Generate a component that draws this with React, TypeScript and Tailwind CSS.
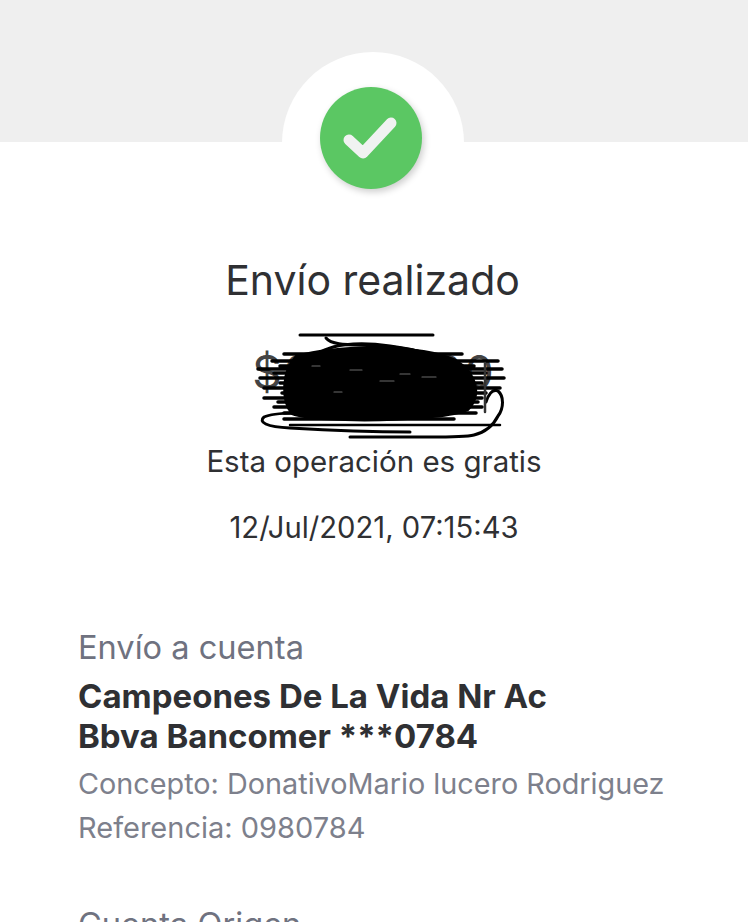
import React, { FC } from "react";

const Scribble: FC = () => (
  <svg className="absolute left-[250px] top-[330px]" width="260" height="112" viewBox="0 0 260 112" fill="none" stroke="#000" strokeLinecap="round">
    <path d="M50 5H183" strokeWidth="3" />
    <path d="M76 8C84 18 112 13 150 18C180 22 196 30 206 42" strokeWidth="3" />
    <path d="M60 30C76 12 112 12 140 16C170 20 190 26 200 38" strokeWidth="3" />
    <path d="M34 24H212M22 31H248M30 36H224M8 39H252M24 43H236M10 48H254M30 53H232M14 58H250M32 63H236M14 68H232M28 72H228M24 77H232M34 83H226M34 89H204" strokeWidth="3.5" />
    <path d="M46 26C90 14 170 14 206 30C228 44 232 66 218 80C190 92 70 94 42 84C30 70 32 40 46 26Z" fill="#000" strokeWidth="2" />
    <path d="M92 84C60 82 24 82 14 87C8 92 16 97 40 98C90 101 130 102 160 102" strokeWidth="3" />
    <path d="M40 95H250" strokeWidth="2.5" />
    <path d="M100 107H153C180 107 212 108 224 105C236 102 244 94 248 86C254 78 254 66 248 61C242 58 238 66 236 72" strokeWidth="3" />
    <path d="M235 33V82" stroke="#333" strokeWidth="2.5" />
    <path d="M100 40H112M130 51H144M84 62H92M150 44H160M172 47H186M62 36H70" stroke="#6a6a6a" strokeWidth="1.2" />
  </svg>
);

const CheckBadge: FC = () => (
  <div className="absolute left-[282px] top-[52px] h-[182px] w-[182px] rounded-full bg-white pt-[35px] pl-[38px]">
    <div className="h-[102px] w-[102px] rounded-full bg-[#5bc763] shadow-[2px_3px_7px_rgba(0,0,0,0.2)]">
      <svg width="102" height="102" viewBox="0 0 102 102" fill="none">
        <path d="M29 53L43 66L71 36" stroke="#f0f2f1" strokeWidth="11" strokeLinecap="round" strokeLinejoin="round" />
      </svg>
    </div>
  </div>
);

const App: FC = () => {
  return (
    <div className="relative h-[922px] w-[748px] overflow-hidden bg-white font-['Inter',sans-serif]">
      <div className="h-[142px] bg-[#efefef]" />
      <CheckBadge />
      <section className="flex flex-col items-center pt-[113px] text-[#2f3033]">
        <h1 className="pr-[3px] text-[41px] leading-[50px] font-normal">Envío realizado</h1>
        <p className="mt-[43px] text-[46px] leading-[48px] tracking-[2px] text-[#444]">$0,000.00</p>
        <p className="mt-[47px] text-[29.5px] leading-[36px]">Esta operación es gratis</p>
        <p className="mt-[31px] text-[29.2px] leading-[36px]">12/Jul/2021, 07:15:43</p>
      </section>
      <Scribble />
      <section className="mt-[82px] px-[78px]">
        <p className="text-[32.6px] leading-[38px] text-[#6f7280]">Envío a cuenta</p>
        <p className="mt-[10px] text-[33px] leading-[40px] font-bold text-[#2f3033]">Campeones De La Vida Nr Ac</p>
        <p className="text-[33px] leading-[40px] font-bold text-[#2f3033]">Bbva Bancomer ***0784</p>
        <p className="mt-[6px] whitespace-nowrap text-[28.8px] leading-[44px] text-[#7d808c]">Concepto: DonativoMario lucero Rodriguez</p>
        <p className="text-[29px] leading-[44px] text-[#7d808c]">Referencia: 0980784</p>
        <p className="mt-[55px] text-[32.6px] leading-[38px] text-[#6f7280]">Cuenta Origen</p>
      </section>
    </div>
  );
};

export default App;
